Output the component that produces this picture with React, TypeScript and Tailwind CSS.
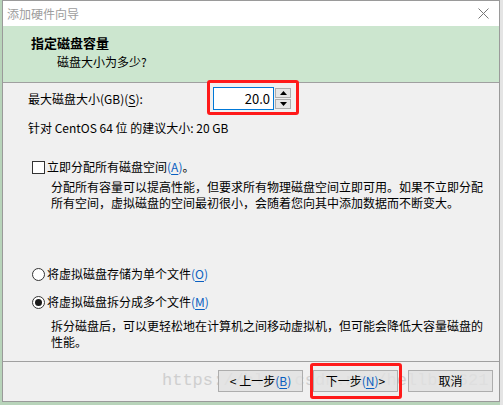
import React from 'react';

const font = { fontFamily: '"Noto Sans CJK SC", "Noto Sans", sans-serif' };

function Key({ k, blue = true }: { k: string; blue?: boolean }) {
  return (
    <span className={blue ? 'text-[#0a5fc0]' : ''}>
      (<span className="underline underline-offset-2">{k}</span>)
    </span>
  );
}

function Radio({ checked }: { checked?: boolean }) {
  return (
    <span className="flex h-[13px] w-[13px] shrink-0 items-center justify-center rounded-full border border-[#333] bg-white">
      {checked && <span className="h-[7px] w-[7px] rounded-full bg-[#1a1a1a]" />}
    </span>
  );
}

function Button({ children }: { children: React.ReactNode }) {
  return (
    <button className="relative z-10 flex h-[22px] w-[85px] items-center justify-center border border-[#adadad] bg-[#e1e1e1]/80 text-[12px] leading-none text-black">
      {children}
    </button>
  );
}

export default function App() {
  return (
    <div className="flex h-[405px] w-[503px] overflow-hidden bg-[#b8d4ba]" style={font}>
      <div className="ml-[2px] flex h-[402px] w-[498px] flex-col border border-[#9a9a9a] bg-[#f0f0f0]">
        {/* title bar */}
        <div className="flex h-[25px] shrink-0 items-center justify-between bg-white pl-[4px] pr-[9px]">
          <span className="text-[12px] leading-none text-[#9d9d9d]">添加硬件向导</span>
          <svg width="11" height="11" viewBox="0 0 11 11" className="mr-[1px]">
            <path d="M0.5 0.5L10.5 10.5M10.5 0.5L0.5 10.5" stroke="#777" strokeWidth="1" />
          </svg>
        </div>

        {/* header */}
        <div className="h-[57px] shrink-0 border-b border-[#a0a0a0] bg-[#cce6cf] pl-[28px] pt-[8px]">
          <div className="text-[13px] font-bold leading-[17px] text-black">指定磁盘容量</div>
          <div className="mt-[3px] pl-[26px] text-[12px] leading-[16px] text-black">磁盘大小为多少?</div>
        </div>

        {/* body */}
        <div className="relative h-[279px] shrink-0 border-b border-[#a0a0a0] pl-[25px] pt-[4px] text-[12px] text-black">
          <div className="flex h-[23px] items-center">
            <span className="w-[185px] leading-none">
              最大磁盘大小(GB)<Key k="S" blue={false} />:
            </span>
            <div className="relative flex items-center">
              <div className="absolute left-[-6px] top-[-7px] h-[35px] w-[92px] rounded-[3px] border-[3px] border-[#ff1a1a]" />
              <div className="flex h-[23px] w-[61px] items-center justify-end border border-[#0078d7] bg-white pr-[3px] text-[13px] leading-none">
                20.0
              </div>
              <div className="ml-[1px] flex flex-col gap-[1px]">
                <div className="flex h-[10px] w-[16px] items-center justify-center border border-[#adadad] bg-[#e6e6e6]">
                  <svg width="7" height="4" viewBox="0 0 7 4"><path d="M3.5 0L7 4H0Z" fill="#000" /></svg>
                </div>
                <div className="flex h-[10px] w-[16px] items-center justify-center border border-[#adadad] bg-[#e6e6e6]">
                  <svg width="7" height="4" viewBox="0 0 7 4"><path d="M0 0H7L3.5 4Z" fill="#000" /></svg>
                </div>
              </div>
            </div>
          </div>

          <div className="mt-[10px] leading-[16px]">针对 CentOS 64 位 的建议大小: 20 GB</div>

          <div className="mt-[23px] flex h-[16px] items-center gap-[2px] pl-[4px]">
            <span className="h-[13px] w-[13px] shrink-0 border border-[#333] bg-white" />
            <span className="leading-none">
              立即分配所有磁盘空间<Key k="A" />。
            </span>
          </div>
          <div className="mt-[4px] whitespace-nowrap pl-[23px] leading-[16px]">
            分配所有容量可以提高性能，但要求所有物理磁盘空间立即可用。如果不立即分配
            <br />
            所有空间，虚拟磁盘的空间最初很小，会随着您向其中添加数据而不断变大。
          </div>

          <div className="mt-[55px] flex h-[16px] items-center gap-[2px] pl-[4px]">
            <Radio />
            <span className="leading-none">
              将虚拟磁盘存储为单个文件<Key k="O" />
            </span>
          </div>
          <div className="mt-[12px] flex h-[16px] items-center gap-[2px] pl-[4px]">
            <Radio checked />
            <span className="leading-none">
              将虚拟磁盘拆分成多个文件<Key k="M" />
            </span>
          </div>
          <div className="mt-[8px] whitespace-nowrap pl-[23px] leading-[16px]">
            拆分磁盘后，可以更轻松地在计算机之间移动虚拟机，但可能会降低大容量磁盘的
            <br />
            性能。
          </div>
        </div>

        {/* footer */}
        <div className="relative flex flex-1 items-start justify-end gap-[10px] pr-[6px] pt-[8px]">
          <div
            className="pointer-events-none absolute left-[159px] top-[8px] whitespace-nowrap text-[17px] leading-[22px] text-[#cfcfcf]"
            style={{ fontFamily: '"Liberation Mono", monospace' }}
          >
            https://blog.csdn.net/hellboy621
          </div>
          <Button>
            &lt; 上一步<Key k="B" />
          </Button>
          <div className="relative z-10">
            <div className="absolute left-[-3px] top-[-7px] h-[36px] w-[92px] rounded-[3px] border-[3px] border-[#ff1a1a]" />
            <Button>
              下一步<Key k="N" /> &gt;
            </Button>
          </div>
          <Button>取消</Button>
        </div>
      </div>
      <div className="h-[405px] flex-1 bg-[#e4e4e4]" />
    </div>
  );
}
